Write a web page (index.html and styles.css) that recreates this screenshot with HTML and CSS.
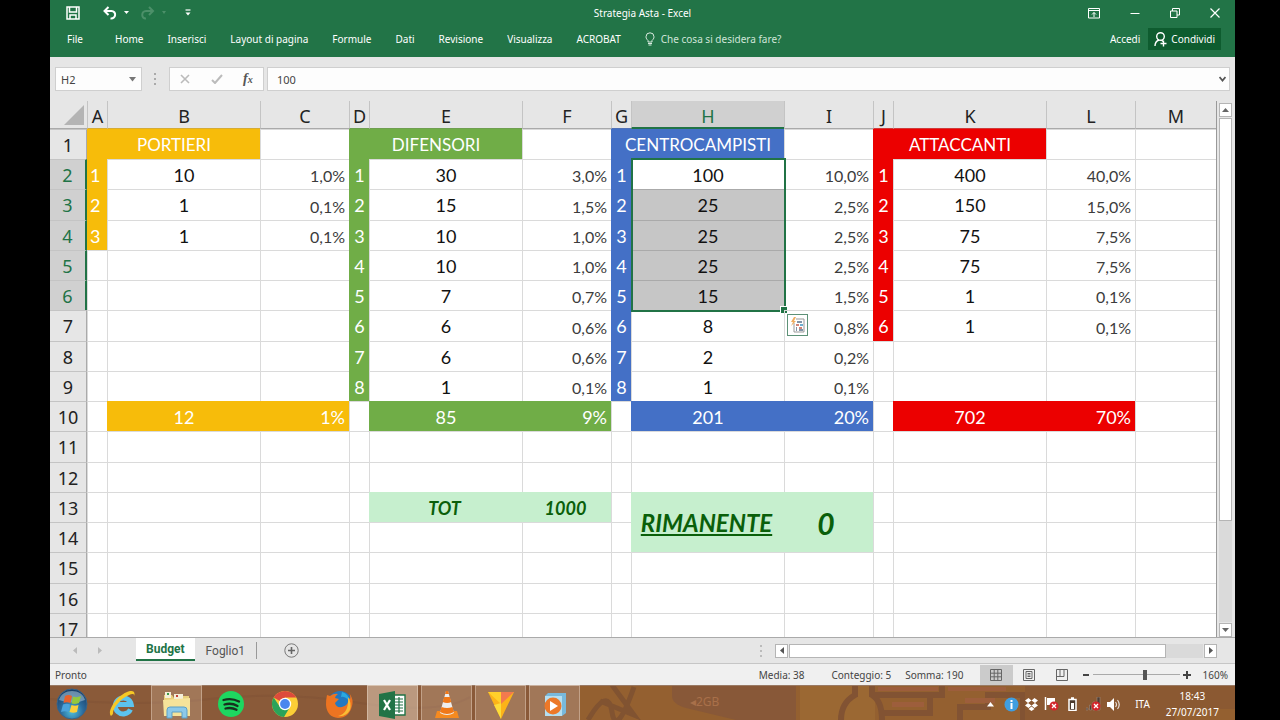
FILE: index.html
```html
<!DOCTYPE html>
<html lang="it">
<head>
<meta charset="utf-8">
<title>Strategia Asta - Excel</title>
<link rel="stylesheet" href="styles.css">
</head>
<body>
<div class="app">
  <header class="ribbon">
    <div class="titlebar">
      <div class="quick">
        <button aria-label="Salva"><svg width="14" height="14" viewBox="0 0 14 14"><path d="M1 1h12v12H1zM3.500 1v5h7V1M4 13V9h6v4" fill="none" stroke="#fff" stroke-width="1.500"/></svg></button>
        <button class="undo" aria-label="Annulla"><svg width="26" height="14" viewBox="0 0 26 14"><path d="M1.500 5h7c5 0 5 8-1 7.500M5.500 1L1.500 5l4 4" fill="none" stroke="#fff" stroke-width="2"/><path d="M21 5h5l-2.500 3z" fill="#fff"/></svg></button>
        <button class="redo" aria-label="Ripeti"><svg width="26" height="14" viewBox="0 0 26 14"><path d="M12 5H5C0 5 0 13 5 12.500M8 1l4 4-4 4" fill="none" stroke="#4c9069" stroke-width="2"/><path d="M21 5h4l-2 3z" fill="#4c9069"/></svg></button>
        <button aria-label="Personalizza"><svg width="6" height="8" viewBox="0 0 6 8"><path d="M.5 1h5" stroke="#fff" stroke-width="1.200"/><path d="M.5 3.500h5L3 6.500z" fill="#fff"/></svg></button>
      </div>
      <h1>Strategia Asta - Excel</h1>
      <div class="winbtns">
        <button aria-label="Opzioni barra multifunzione"><svg width="12" height="11" viewBox="0 0 12 11"><path d="M.5.5h11v9.500H.5zM.5 2.500h11M6 9V4.500M4 6.500l2-2 2 2" fill="none" stroke="#fff"/></svg></button>
        <button aria-label="Riduci a icona"><svg width="10" height="10" viewBox="0 0 10 10"><path d="M.5 5.500h9" stroke="#fff"/></svg></button>
        <button aria-label="Ripristina"><svg width="10" height="10" viewBox="0 0 10 10"><path d="M.5 3h6.500v6.500H.5zM2.500 3V.5h7V7H7" fill="none" stroke="#fff"/></svg></button>
        <button aria-label="Chiudi"><svg width="10" height="10" viewBox="0 0 10 10"><path d="M.5.5l9 9M9.500.5l-9 9" stroke="#fff" stroke-width="1.200"/></svg></button>
      </div>
    </div>
    <nav class="menu">
      <button class="file">File</button>
      <button>Home</button>
      <button>Inserisci</button>
      <button>Layout di pagina</button>
      <button>Formule</button>
      <button>Dati</button>
      <button>Revisione</button>
      <button>Visualizza</button>
      <button>ACROBAT</button>
      <button class="tell"><svg width="10" height="14" viewBox="0 0 10 14"><path d="M3 10V8.500C2 7.500 1 6.500 1 4.800a4 4 0 018 0C9 6.500 8 7.500 7 8.500V10zM3 11.500h4M3.500 13h3" fill="none" stroke="#d9eadf"/></svg>Che cosa si desidera fare?</button>
      <span class="spacer"></span>
      <button class="login">Accedi</button>
      <button class="share"><svg width="13" height="15" viewBox="0 0 13 15"><circle cx="6.500" cy="4.500" r="3.800" fill="none" stroke="#fff" stroke-width="1.400"/><path d="M1 14c0-3.500 1.500-5 4-6M7.500 8l1.500 1.500M9.500 8.500v6M6.500 11.500h6" fill="none" stroke="#fff" stroke-width="1.400"/></svg>Condividi</button>
    </nav>
  </header>

  <div class="formula">
    <div class="namebox"><input aria-label="Casella nome" value="H2"><button aria-label="Elenco nomi"><svg width="7" height="5" viewBox="0 0 7 5"><path d="M0 0h7L3.500 4.500z" fill="#777"/></svg></button></div>
    <svg class="grip" width="2" height="12" viewBox="0 0 2 12"><path d="M1 0v12" stroke="#aaa" stroke-width="2" stroke-dasharray="2 3"/></svg>
    <div class="fxbtns">
      <button aria-label="Annulla"><svg width="10" height="10" viewBox="0 0 10 10"><path d="M1 1l8 8M9 1L1 9" stroke="#bbb" stroke-width="1.600"/></svg></button>
      <button aria-label="Invio"><svg width="12" height="10" viewBox="0 0 12 10"><path d="M1 6l3 3 7-8" fill="none" stroke="#bbb" stroke-width="2"/></svg></button>
      <button class="fx" aria-label="Inserisci funzione">f<sub>x</sub></button>
    </div>
    <div class="bar"><input aria-label="Barra della formula" value="100"><button aria-label="Espandi"><svg width="7" height="6" viewBox="0 0 7 6"><path d="M.5 1l3 3.500 3-3.500" fill="none" stroke="#555" stroke-width="1.800"/></svg></button></div>
  </div>

  <main class="work">
    <div class="sheet">
      <table>
        <colgroup><col class="hd"><col class="s"><col class="m"><col class="p"><col class="s"><col class="m"><col class="p"><col class="s"><col class="m"><col class="p"><col class="s"><col class="m"><col class="p"><col></colgroup>
        <thead>
          <tr><th class="corner"><svg width="20" height="20" viewBox="0 0 20 20"><path d="M20 0v20H0z" fill="#b4b4b4"/></svg></th><th class="uy">A</th><th class="uy">B</th><th>C</th><th class="ug">D</th><th class="ug">E</th><th>F</th><th class="ub">G</th><th class="on">H</th><th>I</th><th class="ur">J</th><th class="ur">K</th><th>L</th><th>M</th></tr>
        </thead>
        <tbody>
          <tr><th>1</th><td class="y title" colspan="2">PORTIERI</td><td></td><td class="g title" colspan="2">DIFENSORI</td><td></td><td class="b title" colspan="2">CENTROCAMPISTI</td><td></td><td class="r title" colspan="2">ATTACCANTI</td><td></td><td></td></tr>
          <tr><th class="on">2</th><td class="y first">1</td><td>10</td><td class="pct">1,0%</td><td class="g">1</td><td>30</td><td class="pct">3,0%</td><td class="b">1</td><td class="active">100<div class="selection"></div></td><td class="pct">10,0%</td><td class="r">1</td><td>400</td><td class="pct">40,0%</td><td></td></tr>
          <tr><th class="on">3</th><td class="y first">2</td><td>1</td><td class="pct">0,1%</td><td class="g">2</td><td>15</td><td class="pct">1,5%</td><td class="b">2</td><td class="sel">25</td><td class="pct">2,5%</td><td class="r">2</td><td>150</td><td class="pct">15,0%</td><td></td></tr>
          <tr><th class="on">4</th><td class="y first">3</td><td>1</td><td class="pct">0,1%</td><td class="g">3</td><td>10</td><td class="pct">1,0%</td><td class="b">3</td><td class="sel">25</td><td class="pct">2,5%</td><td class="r">3</td><td>75</td><td class="pct">7,5%</td><td></td></tr>
          <tr><th class="on">5</th><td></td><td></td><td></td><td class="g">4</td><td>10</td><td class="pct">1,0%</td><td class="b">4</td><td class="sel">25</td><td class="pct">2,5%</td><td class="r">4</td><td>75</td><td class="pct">7,5%</td><td></td></tr>
          <tr><th class="on">6</th><td></td><td></td><td></td><td class="g">5</td><td>7</td><td class="pct">0,7%</td><td class="b">5</td><td class="sel">15</td><td class="pct">1,5%</td><td class="r">5</td><td>1</td><td class="pct">0,1%</td><td></td></tr>
          <tr><th>7</th><td></td><td></td><td></td><td class="g">6</td><td>6</td><td class="pct">0,6%</td><td class="b">6</td><td>8</td><td class="pct anchor">0,8%<button class="analysis" aria-label="Analisi rapida"><svg width="15" height="16" viewBox="0 0 15 16"><path d="M4 6v9h10V2H6" fill="none" stroke="#999"/><path d="M7 5h5M6 11h1M6 13h1M9 13h4" stroke="#58718a" stroke-width="1.400"/><path d="M6 8h3M9 11h3" stroke="#c55a4a" stroke-width="1.600"/><path d="M10 8h3" stroke="#4a9ac5" stroke-width="1.600"/><path d="M4 0L1 5h2L1 9l5-5H4l2-4z" fill="#efae62"/></svg></button></td><td class="r">6</td><td>1</td><td class="pct">0,1%</td><td></td></tr>
          <tr><th>8</th><td></td><td></td><td></td><td class="g">7</td><td>6</td><td class="pct">0,6%</td><td class="b">7</td><td>2</td><td class="pct">0,2%</td><td></td><td></td><td></td><td></td></tr>
          <tr><th>9</th><td></td><td></td><td></td><td class="g">8</td><td>1</td><td class="pct">0,1%</td><td class="b">8</td><td>1</td><td class="pct">0,1%</td><td></td><td></td><td></td><td></td></tr>
          <tr><th>10</th><td></td><td class="y">12</td><td class="y end">1%</td><td></td><td class="g">85</td><td class="g end">9%</td><td></td><td class="b">201</td><td class="b end">20%</td><td></td><td class="r">702</td><td class="r end">70%</td><td></td></tr>
          <tr><th>11</th><td></td><td></td><td></td><td></td><td></td><td></td><td></td><td></td><td></td><td></td><td></td><td></td><td></td></tr>
          <tr><th>12</th><td></td><td></td><td></td><td></td><td></td><td></td><td></td><td></td><td></td><td></td><td></td><td></td><td></td></tr>
          <tr><th>13</th><td></td><td></td><td></td><td></td><td class="good">TOT</td><td class="good">1000</td><td></td><td class="good big" rowspan="2"><u>RIMANENTE</u></td><td class="good zero" rowspan="2">0</td><td></td><td></td><td></td><td></td></tr>
          <tr><th>14</th><td></td><td></td><td></td><td></td><td></td><td></td><td></td><td></td><td></td><td></td><td></td></tr>
          <tr><th>15</th><td></td><td></td><td></td><td></td><td></td><td></td><td></td><td></td><td></td><td></td><td></td><td></td><td></td></tr>
          <tr><th>16</th><td></td><td></td><td></td><td></td><td></td><td></td><td></td><td></td><td></td><td></td><td></td><td></td><td></td></tr>
          <tr><th>17</th><td></td><td></td><td></td><td></td><td></td><td></td><td></td><td></td><td></td><td></td><td></td><td></td><td></td></tr>
        </tbody>
      </table>
    </div>
    <div class="vscroll">
      <button aria-label="Su"><svg width="7" height="4" viewBox="0 0 7 4"><path d="M0 4h7L3.500 0z" fill="#666"/></svg></button>
      <div class="vtrack"><div class="vthumb"></div></div>
      <button aria-label="Giù"><svg width="7" height="4" viewBox="0 0 7 4"><path d="M0 0h7L3.500 4z" fill="#666"/></svg></button>
    </div>
  </main>

  <div class="tabs">
    <div class="nav"><svg width="4" height="7" viewBox="0 0 4 7"><path d="M4 0v7L0 3.500z" fill="#bbb"/></svg><svg width="4" height="7" viewBox="0 0 4 7"><path d="M0 0v7l4-3.500z" fill="#bbb"/></svg></div>
    <button class="tab current">Budget</button>
    <button class="tab">Foglio1</button>
    <button class="add" aria-label="Nuovo foglio"><svg width="15" height="15" viewBox="0 0 15 15"><circle cx="7.500" cy="7.500" r="6.700" fill="none" stroke="#777"/><path d="M7.500 4v7M4 7.500h7" stroke="#666" stroke-width="1.600"/></svg></button>
    <span class="spacer"></span>
    <svg class="grip" width="2" height="12" viewBox="0 0 2 12"><path d="M1 0v12" stroke="#bbb" stroke-width="2" stroke-dasharray="2 3"/></svg>
    <div class="hscroll">
      <button aria-label="Sinistra"><svg width="4" height="7" viewBox="0 0 4 7"><path d="M4 0v7L0 3.500z" fill="#555"/></svg></button>
      <div class="htrack"><div class="hthumb"></div></div>
      <button aria-label="Destra"><svg width="4" height="7" viewBox="0 0 4 7"><path d="M0 0v7l4-3.500z" fill="#555"/></svg></button>
    </div>
  </div>

  <footer class="status">
    <span>Pronto</span>
    <span class="spacer"></span>
    <span class="media">Media: 38</span><span class="count">Conteggio: 5</span><span class="sum">Somma: 190</span>
    <button class="view on" aria-label="Normale"><svg width="12" height="12" viewBox="0 0 12 12"><path d="M.5.5h11v11H.5zM4.200 0v12M7.800 0v12M0 4.200h12M0 7.800h12" fill="none" stroke="#666"/></svg></button>
    <button class="view" aria-label="Layout di pagina"><svg width="12" height="12" viewBox="0 0 12 12"><path d="M.5.5h11v11H.5zM3 2.500h6v7H3zM4.500 4.500h3M4.500 6h3M4.500 7.500h3" fill="none" stroke="#666"/></svg></button>
    <button class="view" aria-label="Anteprima interruzioni"><svg width="12" height="12" viewBox="0 0 12 12"><path d="M.5.5h11v11H.5zM0 7.500h8V0M4 0v7" fill="none" stroke="#666"/></svg></button>
    <button class="step" aria-label="Riduci"><svg width="6" height="8" viewBox="0 0 6 8"><path d="M0 4h6" stroke="#444" stroke-width="2"/></svg></button>
    <input type="range" aria-label="Zoom" min="0" max="100" value="61">
    <button class="step" aria-label="Ingrandisci"><svg width="8" height="8" viewBox="0 0 8 8"><path d="M0 4h8M4 0v8" stroke="#444" stroke-width="2"/></svg></button>
    <span class="zoom">160%</span>
  </footer>

  <div class="taskbar">
    <svg class="wall" viewBox="0 0 1185 35" preserveAspectRatio="none">
      <path d="M0 0h530v35H0z" fill="#8a5a39"/><path d="M530 0h655v35H530z" fill="#946030"/>
      <path d="M750 0h75v35h-75z" fill="#9b6833"/>
      <path d="M622 0h124v35h-60l-50-12q-14-4-14-12z" fill="#885838"/>
      <path d="M538 35q20-34 24-8t22-25M562 0l22 30-34-14" fill="none" stroke="#815331" stroke-width="5"/>
      <path d="M0 14q90 8 160 0t150 4 110-6" fill="none" stroke="#805235" stroke-width="2" opacity=".5"/>
      <path d="M805 0v10q-14 8-14 25M822 0v10q10 6 10 25M822 10h70V0M832 28h48V12M910 35V22h28V10h35v25" fill="none" stroke="#825333" stroke-width="6"/>
      <path d="M828 2h60v4h-60zM898 2h58v4h-58zM842 17h32v5h-32zM915 13h30v5h-30z" fill="#9d5e3c"/>
      <path d="M975 0h210v24h-60v11H975z" fill="#8b5932"/><path d="M0 .5h1185" stroke="#9a7a64"/>
    </svg>
    <span class="deco" aria-hidden="true">◂2GB</span>
    <button class="start" aria-label="Start"><svg width="32" height="32" viewBox="0 0 32 32"><defs><radialGradient id="orb" cx=".5" cy=".75" r=".75"><stop offset="0" stop-color="#4fc0dc"/><stop offset=".5" stop-color="#2b6a9c"/><stop offset="1" stop-color="#173a63"/></radialGradient></defs><circle cx="16" cy="16" r="15" fill="url(#orb)" stroke="#37648a"/><path d="M3 12C6 0 26 0 29 12q-12 5-26 0z" fill="#a9c6d8" opacity=".55"/><path d="M9 8q3.500-2 7 0l-1.500 7q-3.500-1.500-7 0z" fill="#e8612c"/><path d="M17 8.500q4 1.500 8-.5L23 15q-4 1.500-7.500.5z" fill="#93c83d"/><path d="M7 16.500q3.500-1.500 7 0L12.500 24q-3.500-1.500-7.500 0z" fill="#4ba3dc"/><path d="M15.500 17q3.500 1.500 7 0L21 24q-3.500 1.500-7.500 0z" fill="#fbce3a"/></svg></button>
    <button aria-label="Internet Explorer"><svg width="28" height="30" viewBox="0 0 28 30"><path d="M21.500 20.500a8 8 0 11.700-5H9" fill="none" stroke="#5cc4ee" stroke-width="5"/><path d="M2 27C-3 22 10 4 21 2q6-1 4 6c1-3-1-4-5-2C12 9 3 20 4 25z" fill="#f6c825"/></svg></button>
    <button class="open" aria-label="Esplora file"><svg width="30" height="28" viewBox="0 0 30 28"><path d="M2 4h8l2 3h6l1-2h8v20H2z" fill="#e8cf79"/><path d="M3 1h6v6H3zM12 3h9v5h-9z" fill="#f4efd8"/><path d="M5 2h2v2H5z" fill="#3b9a4a"/><path d="M14 4h2v2h-2z" fill="#c64033"/><path d="M1 9l27-2v18H2z" fill="#f6e39a"/><path d="M5 27v-8q0-3 3-3h14q3 0 3 3v8h-5v-6H10v6z" fill="#8cc9ea" stroke="#5b9fc6"/></svg></button>
    <button aria-label="Spotify"><svg width="28" height="28" viewBox="0 0 28 28"><circle cx="14" cy="14" r="13" fill="#1ed760"/><path d="M6.500 10q8-2.500 15.500 1.500M7.500 14.500q7-2 13 1.500M8.500 18.500q6-1.500 11 1.300" fill="none" stroke="#17311f" stroke-width="2.300" stroke-linecap="round"/></svg></button>
    <button aria-label="Chrome"><svg width="28" height="28" viewBox="0 0 28 28"><circle cx="14" cy="14" r="13" fill="#fbce36"/><path d="M14 14L2.700 7.500A13 13 0 0125.300 7.500H14z" fill="#dd4b3c"/><path d="M2.700 7.500A13 13 0 0013 27l6-10-10 0z" fill="#2ba35a"/><circle cx="14" cy="14" r="6.200" fill="#fff"/><circle cx="14" cy="14" r="4.900" fill="#4a86ee"/></svg></button>
    <button aria-label="Firefox"><svg width="28" height="30" viewBox="0 0 28 30"><circle cx="15" cy="14" r="12" fill="#2379c0"/><path d="M17 3q7 2 7 9-4-5-8-4z" fill="#2ba9df"/><path d="M2 6l3 1q4-3 8-2-3 2-3 4l4 1-4 4q1 5 7 4 7-2 7-9l1 1q1-3-1-6 5 6 3 13-3 12-14 12Q2 28 1 16 1 10 2 6z" fill="#ed7421"/><path d="M23 8q4 6 2 13-4 7-12 6 11-2 10-19z" fill="#f9bd35"/></svg></button>
    <button class="open front" aria-label="Excel"><svg width="27" height="28" viewBox="0 0 27 28"><path d="M14 4h12v20H14z" fill="#fff" stroke="#217346" stroke-width="1.400"/><path d="M16 8h8M16 11h8M16 14h8M16 17h8M16 20h8M20 6v16" stroke="#217346" stroke-width="1.200"/><path d="M0 3l16-3v28L0 25z" fill="#217346"/><path d="M5 9l6 10M11 9L5 19" stroke="#fff" stroke-width="2.200"/></svg></button>
    <button class="open" aria-label="VLC"><svg width="26" height="28" viewBox="0 0 26 28"><path d="M3 20h20l2 7H1z" fill="#f58a1f"/><path d="M12 0h2l6 22q-7 4-14 0z" fill="#eee"/><path d="M12 0h2l1 3h-4zM10.200 6h5.600l1.500 5q-4 2-8.600 0zM7.500 16q5.500 2 11 0l1.500 5q-7 4-14 0z" fill="#f07818"/></svg></button>
    <button class="open" aria-label="Attività"><svg width="28" height="28" viewBox="0 0 28 28"><path d="M1 1h26L14 28z" fill="#fcb319"/><path d="M1 1h13v12z" fill="#ffd02b"/><path d="M27 1H14v12z" fill="#f37a4e"/><path d="M14 12v16L7 14z" fill="#fddc3a"/></svg></button>
    <button class="open" aria-label="Media Player"><svg width="24" height="24" viewBox="0 0 24 24"><path d="M2 3l3-3h18v20l-4 3H2z" fill="#78b9dc"/><path d="M2 3h17v20H2z" fill="#b5dff1"/><circle cx="10" cy="13" r="8.500" fill="#ec7828"/><path d="M7 8l8 5-8 5z" fill="#fff"/></svg></button>
    <span class="spacer"></span>
    <div class="tray">
      <svg class="more" width="7" height="5" viewBox="0 0 7 5"><path d="M0 4.500h7L3.500 0z" fill="#fff"/></svg>
      <svg width="15" height="15" viewBox="0 0 15 15"><circle cx="7.500" cy="7.500" r="7" fill="#3f9ee0"/><path d="M7.500 6v6M7.500 3v2" stroke="#fff" stroke-width="2"/></svg>
      <svg width="13" height="13" viewBox="0 0 13 13"><path d="M3.500 0L0 2.500 3 5l3.500-2.500zM9.500 0L13 2.500 10 5 6.500 2.500zM3 5L0 7.500 3.500 10l3-2.500zM10 5l3 2.500L9.500 10l-3-2.500zM3.500 11l3-2.500 3 2.500-3 2z" fill="#fff"/></svg>
      <svg width="15" height="14" viewBox="0 0 15 14"><path d="M1.500 0v13" stroke="#fff" stroke-width="1.500"/><path d="M3 1h8v7H3z" fill="#fff"/><circle cx="10" cy="9" r="4.500" fill="#d3252b"/><path d="M8 7l4 4M12 7l-4 4" stroke="#fff" stroke-width="1.300"/></svg>
      <svg class="bat" width="9" height="14" viewBox="0 0 9 14"><path d="M1 2.500h7v11H1zM3 1h3" fill="#4a3a2e" stroke="#fff" stroke-width="1.500"/><path d="M3 6h3v6H3z" fill="#fff"/></svg>
      <svg width="15" height="14" viewBox="0 0 15 14"><path d="M0 13h2v-2H0zM3.500 13h2V8h-2zM7 13h2V5H7zM11 13h3V0h-3z" fill="#4f3d33" stroke="#a08c7e" stroke-width=".6"/><circle cx="10" cy="9" r="4.500" fill="#d3252b"/><path d="M8 7l4 4M12 7l-4 4" stroke="#fff" stroke-width="1.300"/></svg>
      <svg width="13" height="13" viewBox="0 0 13 13"><path d="M0 4h3l4-4v13L3 9H0z" fill="#fff"/><path d="M8.500 4q2 2.500 0 5M10.500 2q3.500 4.500 0 9" fill="none" stroke="#e6dfda" stroke-width="1.200"/></svg>
      <span class="lang">ITA</span>
      <div class="clock"><span>18:43</span><span>27/07/2017</span></div>
    </div>
  </div>
</div>
</body>
</html>
```
FILE: styles.css
```css
* { box-sizing: border-box; }
body {
  margin: 0;
  padding: 0 45px 0 50px;
  background: #000;
  font-family: "Noto Sans", sans-serif;
  font-size: 10px;
  color: #444;
}
button, input { font: inherit; color: inherit; margin: 0; padding: 0; border: 0; background: none; }
button { display: flex; align-items: center; justify-content: center; white-space: nowrap; }
svg { display: block; flex: none; }
.spacer { flex: 1; }
.app { display: flex; flex-direction: column; height: 100vh; background: #e6e6e6; overflow: hidden; }

/* ribbon */
.ribbon { background: #227447; color: #fff; flex: none; }
.titlebar { display: grid; grid-template-columns: 1fr auto 1fr; align-items: center; height: 26px; }
.titlebar h1 { margin: 0; font-size: 10px; font-weight: 400; }
.quick { display: flex; align-items: center; gap: 24px; padding-left: 16px; height: 22px; }
.quick .undo { margin-left: -1px; }
.quick .redo { margin: 0 -6px 0 -12px; }
.winbtns { display: flex; justify-content: flex-end; align-items: center; gap: 30px; padding-right: 15px; height: 22px; }
.menu { display: flex; align-items: center; height: 31px; padding: 0 14px 5px 5px; }
.menu button { padding: 0 12px; height: 22px; }
.menu .file { padding-right: 20px; }
.menu .tell { gap: 6px; color: #cfe5d8; }
.menu .login { padding: 0 8px; }
.menu .share { background: #0e5c2f; padding: 0 6px; gap: 4px; }

/* formula bar */
.formula { display: flex; align-items: center; height: 44px; padding: 0 5px; flex: none; font-size: 11px; }
.namebox, .fxbtns, .bar { display: flex; align-items: center; height: 24px; background: #fdfdfd; border: 1px solid #cfcfcf; }
.namebox { width: 87px; padding: 0 5px; }
.namebox input { flex: 1; min-width: 0; }
.grip { margin: 0 13px 0 12px; }
.fxbtns { width: 95px; justify-content: space-around; margin-right: 3px; }
.fx { font: italic 700 14px "Liberation Serif", serif; color: #555; }
.fx sub { font-size: 10px; }
.bar { flex: 1; padding: 0 3px 0 9px; }
.bar input { flex: 1; }

/* sheet */
.work { display: flex; flex: 1; min-height: 0; }
.sheet { flex: 1; overflow: hidden; border-right: 1px solid #999; background: #fff; }
table { width: 100%; table-layout: fixed; border-collapse: separate; border-spacing: 0; font: 18px/22px Lato, sans-serif; color: #111; }
.hd { width: 37px; }
.s { width: 20px; }
.m { width: 153px; }
.p { width: 89px; }
tr { height: 30px; }
tbody tr:nth-child(4n+3) { height: 31px; }
thead tr { height: 28px; }
th { font-family: "Noto Sans", sans-serif; font-weight: 400; padding: 0; background: #e6e6e6; color: #222; }
thead th { border-left: 1px solid #c4c4c4; border-bottom: 1px solid #aaa; padding-top: 3px; }
thead .corner { border-left: 0; padding: 0 3px 3px 0; vertical-align: bottom; }
.corner svg { margin-left: auto; }
thead .uy { border-bottom-color: #d6ac35; }
thead .ug { border-bottom-color: #6f9f50; }
thead .ub { border-bottom-color: #5272b8; }
thead .ur { border-bottom-color: #cf3b3b; }
th.on { background: #d0d0d0; color: #217346; }
thead .on { border-bottom: 2px solid #217346; }
tbody th { border-top: 1px solid #c4c4c4; border-right: 1px solid #aaa; }
tbody th.on { border-right: 2px solid #217346; }
td { padding: 0; text-align: center; border: 0 solid #dadada; border-width: 1px 0 0 1px; white-space: nowrap; }
.title { font-size: 17px; }
.pct { font-size: 16px; text-align: right; padding: 3px 4px 0 0; color: #3c3c3c; }
.end { text-align: right; padding-right: 4px; }
.first { text-align: left; padding-left: 2px; }
.y { background: #f7bc0a; border-color: #f7bc0a; color: #fff; }
.g { background: #70ad47; border-color: #70ad47; color: #fff; }
.b { background: #4470c6; border-color: #4470c6; color: #fff; }
.r { background: #ec0000; border-color: #ec0000; color: #fff; }
.good { background: #c6efce; border-color: #c6efce; color: #0a5f0a; font-style: italic; font-weight: 700; padding-right: 3px; }
.big { font-size: 24px; }
.zero { font-size: 30px; padding-right: 6px; }
.sel { background: #c6c6c6; border-color: #aaa; }
.active, .anchor { position: relative; }
.selection { position: absolute; top: -2px; left: -1px; right: -2px; height: 154px; border: 2px solid #217346; }
.selection::after { content: ""; position: absolute; right: -3px; bottom: -3px; width: 6px; height: 6px; background: #217346; border: 1px solid #fff; border-width: 1px 0 0 1px; }
.analysis { position: absolute; left: 2px; top: 3px; width: 21px; height: 22px; border: 1px solid #5d9177; background: #fff; }

.vscroll { display: flex; flex-direction: column; width: 18px; padding: 2px 3px 0 2px; gap: 1px; }
.vscroll button, .hscroll button { flex: none; width: 13px; height: 14px; border: 1px solid #b5b5b5; background: #fff; }
.vtrack { flex: 1; background: #dadada; }
.vthumb { height: 80%; background: #fff; border: 1px solid #b5b5b5; }

/* sheet tabs */
.tabs { display: flex; align-items: center; height: 27px; flex: none; border-top: 1px solid #aaa; border-bottom: 1px solid #c6c6c6; font: 12px Roboto, sans-serif; padding-right: 18px; }
.nav { display: flex; gap: 21px; width: 86px; padding-left: 23px; }
.tab { height: 17px; padding: 0 11px; border-right: 1px solid #999; color: #555; }
.tab.current { align-self: flex-start; height: 23px; padding: 0 10px; background: #fff; color: #217346; font-weight: 700; border-right: 0; border-bottom: 2px solid #217346; }
.add { margin-left: 27px; }
.hscroll { display: flex; gap: 1px; width: 442px; }
.htrack { flex: 1; background: #dadada; }
.hthumb { width: 91%; height: 14px; background: #fff; border: 1px solid #b5b5b5; }

/* status bar */
.status { display: flex; align-items: center; height: 21px; flex: none; background: #f0f0f0; padding: 0 7px 0 5px; }
.media { margin-right: 27px; }
.count { margin-right: 14px; }
.sum { margin-right: 16px; }
.view { width: 33px; height: 20px; }
.view.on { background: #cbcbcb; }
.step { width: 14px; }
.status input { -webkit-appearance: none; appearance: none; width: 87px; height: 13px; background: linear-gradient(#aaa, #aaa) center / 100% 1px no-repeat; }
.status input::-webkit-slider-thumb { -webkit-appearance: none; appearance: none; width: 4px; height: 10px; background: #555; }
.zoom { margin-left: 9px; }

/* taskbar */
.taskbar { position: relative; display: flex; align-items: center; gap: 3px; height: 35px; flex: none; color: #fff; }
.taskbar > * { position: relative; }
.taskbar .wall { position: absolute; inset: 0; width: 100%; height: 100%; }
.taskbar .deco { position: absolute; left: 640px; top: 8px; font-size: 12px; color: #a8704a; }
.taskbar button { width: 51px; height: 35px; padding-top: 3px; }
.taskbar .start { width: 44px; }
.taskbar .open { background: rgba(255, 235, 215, .2); border: 1px solid rgba(255, 240, 225, .35); border-bottom: 0; }
.taskbar .front { background: rgba(255, 240, 225, .42); }
.tray { display: flex; align-items: center; gap: 6px; padding-top: 3px; }
.more { margin-right: 4px; }
.bat { margin: 0 3px; }
.lang { margin: 0 10px 0 9px; }
.clock { display: flex; flex-direction: column; align-items: center; line-height: 16px; margin-right: 16px; }
```
